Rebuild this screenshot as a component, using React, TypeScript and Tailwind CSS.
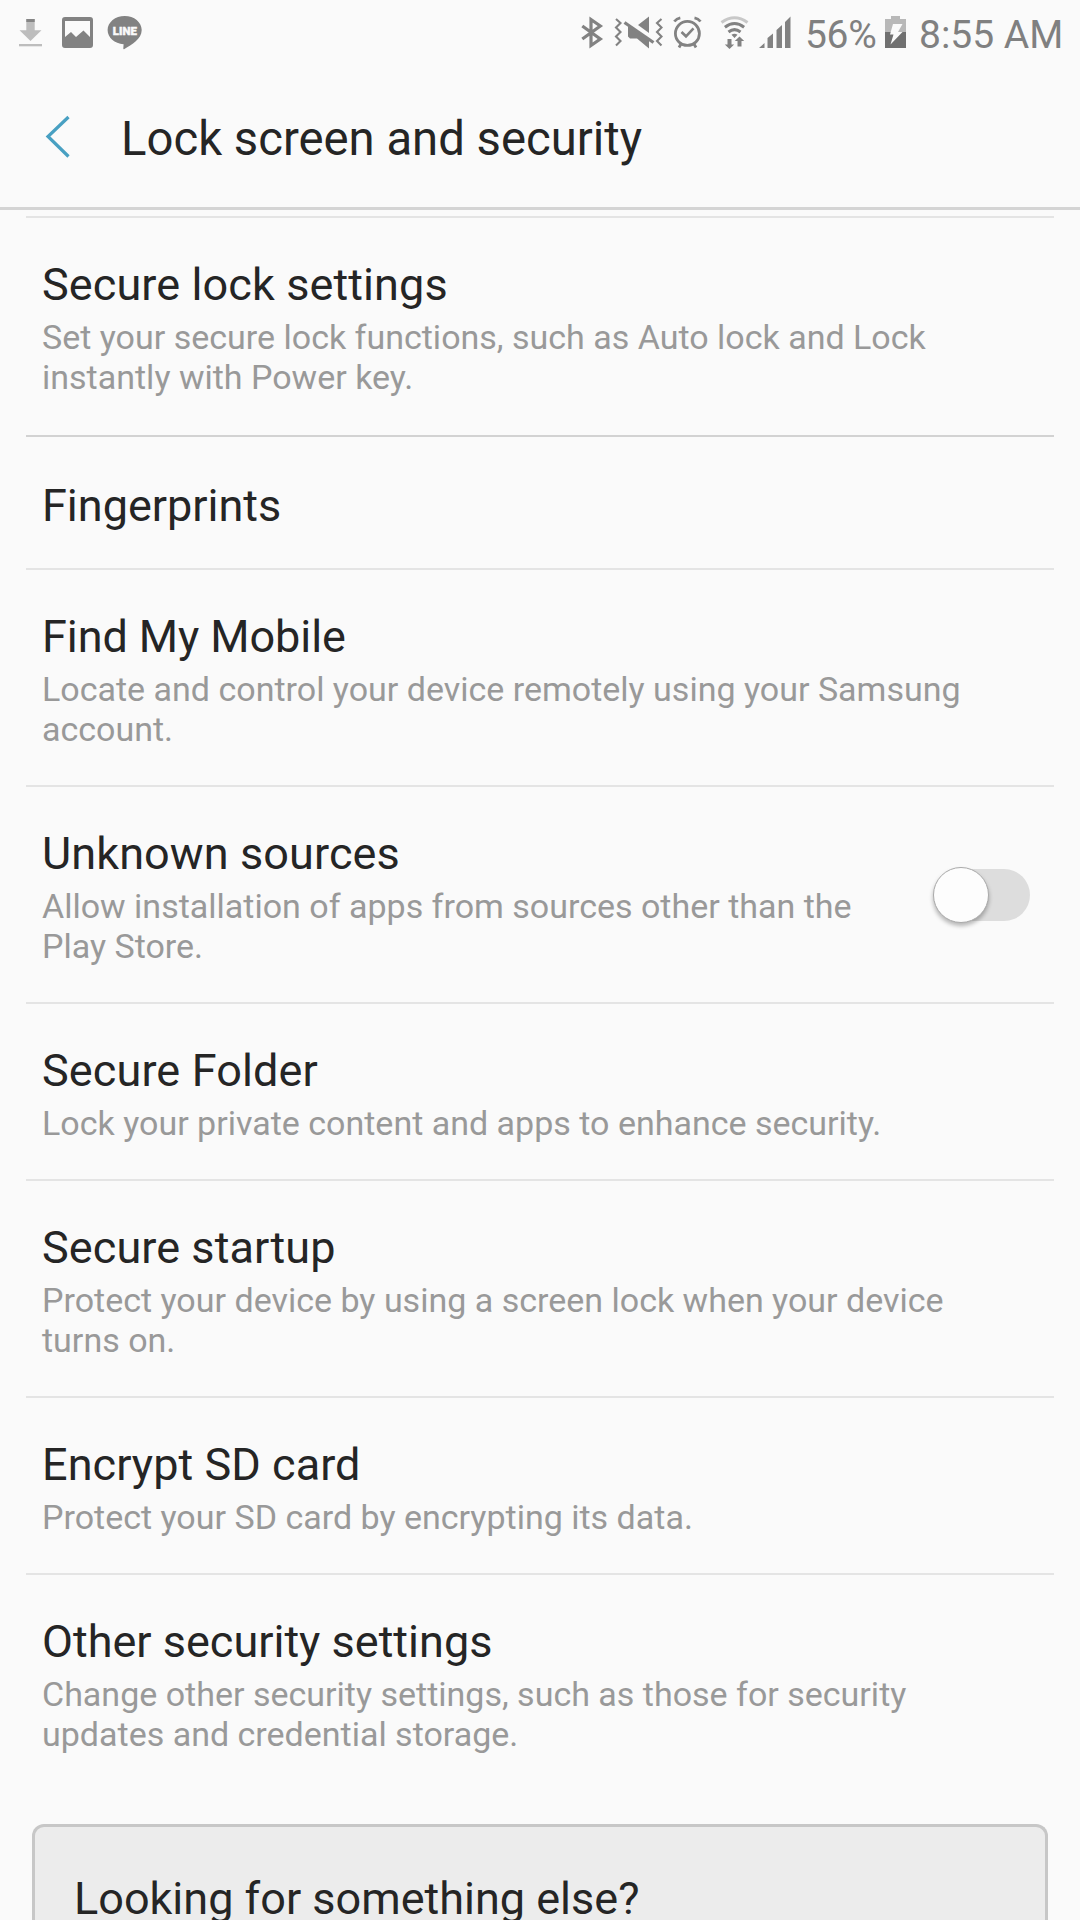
import React from "react";

type Item = { title: string; lines?: string[]; height: string; toggle?: boolean; strong?: boolean; tracking?: string };

const items: Item[] = [
  { title: "Secure lock settings", lines: ["Set your secure lock functions, such as Auto lock and Lock", "instantly with Power key."], height: "h-[219px]", tracking: "tracking-[0.1px]" },
  { title: "Fingerprints", height: "h-[133px]", strong: true },
  { title: "Find My Mobile", lines: ["Locate and control your device remotely using your Samsung", "account."], height: "h-[217px]", tracking: "tracking-[-0.08px]" },
  { title: "Unknown sources", lines: ["Allow installation of apps from sources other than the", "Play Store."], height: "h-[217px]", toggle: true, tracking: "tracking-[0.1px]" },
  { title: "Secure Folder", lines: ["Lock your private content and apps to enhance security."], height: "h-[177px]", tracking: "tracking-[0.12px]" },
  { title: "Secure startup", lines: ["Protect your device by using a screen lock when your device", "turns on."], height: "h-[217px]", tracking: "tracking-[0.08px]" },
  { title: "Encrypt SD card", lines: ["Protect your SD card by encrypting its data."], height: "h-[177px]", tracking: "tracking-[0.05px]" },
  { title: "Other security settings", lines: ["Change other security settings, such as those for security", "updates and credential storage."], height: "h-[251px]" },
];

function NotificationIcons() {
  return (
    <svg width="160" height="70" viewBox="0 0 160 70" className="shrink-0">
      <path d="M26.3 19h8.4v11.2h6.8L30.5 41 19.5 30.2h6.8z" fill="#bdbdbd" />
      <path d="M26.3 19h8.4v3h-8.4z" fill="#858585" />
      <path d="M19 44h23v2.3H19z" fill="#bdbdbd" />
      <path fillRule="evenodd" d="M65 17h25a3 3 0 0 1 3 3v25a3 3 0 0 1-3 3H65a3 3 0 0 1-3-3V20a3 3 0 0 1 3-3zm0 4v16l6-5 5 5 7.500-6.500 6.500 6.500V21z" fill="#828282" />
      <path d="M124.700 16c9.400 0 17 6.200 17 14 0 9-10 14.500-17.300 19-1.300.6-1.100-.4-1-2l.2-2.800c-9-.6-16-6.700-16-14.200 0-7.800 7.700-14 17.100-14z" fill="#828282" />
      <text x="112.800" y="34.800" textLength="24" lengthAdjust="spacingAndGlyphs" fontSize="10.500" fontWeight="900" fontFamily="Roboto, sans-serif" fill="#fafafa" stroke="#fafafa" strokeWidth=".4">LINE</text>
    </svg>
  );
}

function SystemIcons() {
  return (
    <svg width="220" height="70" viewBox="580 0 220 70" className="shrink-0" fill="none" stroke="#828282">
      <path d="M582.300 26l18 13-9.300 6.500V19.500l9.300 6.500-18 13" strokeWidth="3.200" />
      <g strokeWidth="2.100">
        <path d="M616 19l4.500 4-4.500 4.500 4.500 4.500-4.500 4.500 4.500 4.500-4.500 4.500" />
        <path d="M661.500 19l-4.500 4 4.500 4.500-4.500 4.500 4.500 4.500-4.500 4.500 4.500 4.500" />
      </g>
      <path d="M649 16.500V33l-11-8zM628 27h4l17 11.500V48.500l-12-10h-7l-2-2z" fill="#828282" stroke="none" />
      <path d="M624.500 22.500l29 20" strokeWidth="3.200" />
      <circle cx="687.400" cy="33.400" r="12" strokeWidth="2.800" />
      <path d="M681.500 32l4.500 4.300 7.500-8" strokeWidth="2.600" />
      <path d="M674.300 21.500q2.300-3 6-3.700M694.500 17.800q3.700.7 6 3.700M679 47.500l2-3.500M696 47.500l-2-3.500" strokeWidth="2.800" />
      <path d="M721.500 22.500q13-9.500 26 0" stroke="#c8c8c8" strokeWidth="3" />
      <path d="M724.900 27.300q9.600-7.500 19.200 0M728.500 32q6-4.800 12 0" strokeWidth="3" />
      <path d="M731.500 34.800q3-2 6 0l-3 3.200zM727.500 39h4v5.500h2.700L729.500 49l-4.700-4.500h2.700zM737.500 46.500h4V41h2.700l-4.700-4.500-4.700 4.500h2.700z" fill="#828282" stroke="none" />
      <path d="M759 48l5.500-5v5zM767.500 48V38l5.500-4.500V48zM776.500 48V30l5.500-5v23zM785 48V22l5.500-5.500V48z" fill="#828282" stroke="none" />
    </svg>
  );
}

function BatteryIcon() {
  return (
    <svg width="21" height="70" viewBox="885 0 21 70" className="shrink-0">
      <path d="M891 16h9v3h6v13h-21V19h6z" fill="#b8b8b8" />
      <path d="M885 32h21v16h-21z" fill="#707070" />
      <path d="M893 24h9.500l-4.500 8h4.500L890.500 44.500l3-10H890z" fill="#fafafa" />
    </svg>
  );
}

function Toggle() {
  return (
    <button role="switch" aria-checked="false" aria-label="Unknown sources" className="mr-[24px] flex h-[52px] w-[95px] shrink-0 items-center rounded-full bg-[#dddddd]">
      <span className="-ml-[2px] size-[56px] shrink-0 rounded-full border border-[#aaaaaa] bg-[#fdfdfd] shadow-[0_3px_4px_rgba(0,0,0,0.28)]" />
    </button>
  );
}

export default function App() {
  return (
    <main className="flex h-[1920px] w-[1080px] flex-col overflow-hidden bg-[#fafafa] font-['Roboto',sans-serif] text-[#252525]">
      <div className="flex h-[70px] shrink-0 items-center text-[39px] leading-[70px] whitespace-nowrap text-[#808080]">
        <NotificationIcons />
        <div className="ml-auto flex items-center">
          <SystemIcons />
          <span className="w-[80px] pl-[5px] tracking-[-0.3px]">56%</span>
          <span className="w-[5px]" />
          <BatteryIcon />
          <span className="w-[174px] pl-[13px]">8:55 AM</span>
        </div>
      </div>
      <header className="flex h-[140px] shrink-0 items-center border-b-3 border-[#d4d4d4]">
        <svg width="30" height="50" viewBox="0 0 30 50" className="mb-[4px] ml-[43px]" fill="none" stroke="#48a0c2" strokeWidth="3.2">
          <path d="M25.500 5L5 24.500 25.500 44.500" />
        </svg>
        <h1 className="ml-[48px] text-[47.25px] leading-[54px]">Lock screen and security</h1>
      </header>
      <section className="mt-[6px] shrink-0">
        {items.map((item) => (
          <div key={item.title} className={`mx-[26px] flex items-center border-t-2 ${item.strong ? "border-[#d2d2d2]" : "border-[#e4e4e4]"} ${item.height}`}>
            <div className={`grow self-stretch pl-[16px] ${item.lines ? "pt-[40px]" : "pt-[42px]"}`}>
              <h2 className={`text-[45px] leading-[53px] whitespace-nowrap ${item.tracking ?? ""}`}>{item.title}</h2>
              {item.lines && (
                <p className="mt-[6px] text-[34px] leading-[40px] whitespace-nowrap text-[#999999]">
                  {item.lines.map((line) => (
                    <span key={line} className="block">{line}</span>
                  ))}
                </p>
              )}
            </div>
            {item.toggle && <Toggle />}
          </div>
        ))}
      </section>
      <section className="mx-[32px] h-[140px] shrink-0 rounded-t-xl border-3 border-b-0 border-[#c7c7c7] bg-[#ececec] pt-[45px] pl-[39px]">
        <h2 className="text-[45px] leading-[53px]">Looking for something else?</h2>
      </section>
    </main>
  );
}
